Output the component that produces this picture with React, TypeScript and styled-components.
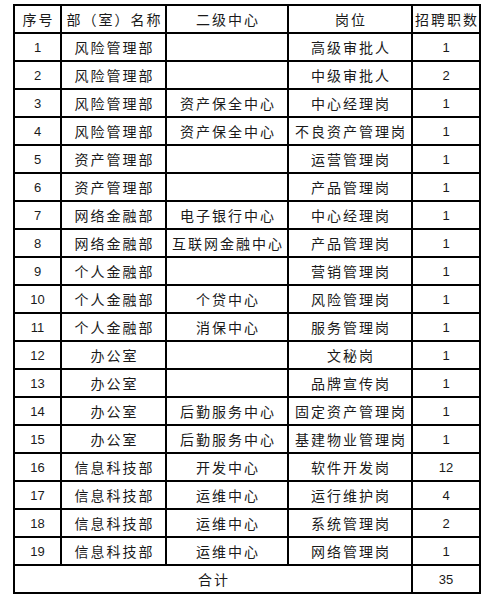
import styled, { createGlobalStyle } from "styled-components";

const GlobalStyle = createGlobalStyle`
    html, body {
        margin: 0;
        padding: 0;
        background: #ffffff;
    }
`;

const Page = styled.div`
    padding: 4px 0 0 13px;
    font-family: "Noto Sans CJK SC", "DejaVu Sans", sans-serif;
    color: #1a1a1a;
`;

const Table = styled.table`
    border-collapse: collapse;
    table-layout: fixed;
    width: 466px;
    border: 2px solid #000;
`;

const Row = styled.tr`
    height: 28px;
`;

const Cell = styled.td<{ $num?: boolean }>`
    border: 2px solid #000;
    padding: 0;
    text-align: center;
    vertical-align: middle;
    font-size: ${(p) => (p.$num ? "13px" : "14px")};
    letter-spacing: ${(p) => (p.$num ? "0" : "2px")};
    text-indent: ${(p) => (p.$num ? "0" : "2px")};
    font-family: ${(p) =>
        p.$num ? `"Liberation Sans", sans-serif` : `"Noto Sans CJK SC", sans-serif`};
    line-height: 1;
    white-space: nowrap;
    overflow: hidden;
`;

const HeadCell = styled(Cell).attrs({ as: "th" })`
    font-weight: normal;
`;

type Job = [string, string, string, number];

const jobs: Job[] = [
    ["风险管理部", "", "高级审批人", 1],
    ["风险管理部", "", "中级审批人", 2],
    ["风险管理部", "资产保全中心", "中心经理岗", 1],
    ["风险管理部", "资产保全中心", "不良资产管理岗", 1],
    ["资产管理部", "", "运营管理岗", 1],
    ["资产管理部", "", "产品管理岗", 1],
    ["网络金融部", "电子银行中心", "中心经理岗", 1],
    ["网络金融部", "互联网金融中心", "产品管理岗", 1],
    ["个人金融部", "", "营销管理岗", 1],
    ["个人金融部", "个贷中心", "风险管理岗", 1],
    ["个人金融部", "消保中心", "服务管理岗", 1],
    ["办公室", "", "文秘岗", 1],
    ["办公室", "", "品牌宣传岗", 1],
    ["办公室", "后勤服务中心", "固定资产管理岗", 1],
    ["办公室", "后勤服务中心", "基建物业管理岗", 1],
    ["信息科技部", "开发中心", "软件开发岗", 12],
    ["信息科技部", "运维中心", "运行维护岗", 4],
    ["信息科技部", "运维中心", "系统管理岗", 2],
    ["信息科技部", "运维中心", "网络管理岗", 1],
];

export default function App() {
    const total = jobs.reduce((sum, j) => sum + j[3], 0);

    return (
        <Page>
            <GlobalStyle />
            <Table>
                <colgroup>
                    <col style={{ width: 47 }} />
                    <col style={{ width: 105 }} />
                    <col style={{ width: 122 }} />
                    <col style={{ width: 124 }} />
                    <col style={{ width: 68 }} />
                </colgroup>
                <thead>
                    <Row>
                        <HeadCell>序号</HeadCell>
                        <HeadCell>部（室）名称</HeadCell>
                        <HeadCell>二级中心</HeadCell>
                        <HeadCell>岗位</HeadCell>
                        <HeadCell>招聘职数</HeadCell>
                    </Row>
                </thead>
                <tbody>
                    {jobs.map((j, i) => (
                        <Row key={i}>
                            <Cell $num>{i + 1}</Cell>
                            <Cell>{j[0]}</Cell>
                            <Cell>{j[1]}</Cell>
                            <Cell>{j[2]}</Cell>
                            <Cell $num>{j[3]}</Cell>
                        </Row>
                    ))}
                    <Row>
                        <Cell colSpan={4}>合计</Cell>
                        <Cell $num>{total}</Cell>
                    </Row>
                </tbody>
            </Table>
        </Page>
    );
}
